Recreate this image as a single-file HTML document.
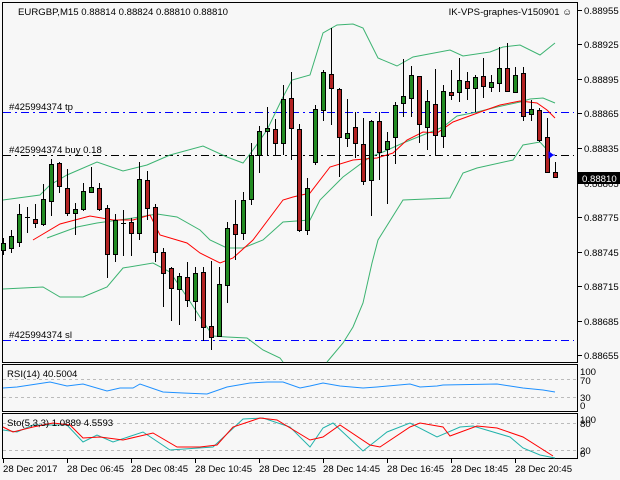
<!DOCTYPE html>
<html><head><meta charset="utf-8"><style>
html,body{margin:0;padding:0;background:#f7f7f7;}
svg{display:block;font-family:"Liberation Sans",sans-serif;font-size:9.6px;}
</style></head><body>
<svg width="620" height="480" viewBox="0 0 620 480" xmlns="http://www.w3.org/2000/svg">
<rect width="620" height="480" fill="#f7f7f7"/>
<g fill="none" stroke="#000" stroke-width="1">
<rect x="2.5" y="2.5" width="575" height="360"/>
<rect x="2.5" y="364.5" width="575" height="47"/>
<rect x="2.5" y="413.5" width="575" height="45"/>
</g>
<g stroke="#000">
<line x1="578" y1="10.5" x2="582" y2="10.5"/><line x1="578" y1="44.5" x2="582" y2="44.5"/><line x1="578" y1="79.5" x2="582" y2="79.5"/><line x1="578" y1="113.5" x2="582" y2="113.5"/><line x1="578" y1="148.5" x2="582" y2="148.5"/><line x1="578" y1="217.5" x2="582" y2="217.5"/><line x1="578" y1="252.5" x2="582" y2="252.5"/><line x1="578" y1="286.5" x2="582" y2="286.5"/><line x1="578" y1="321.5" x2="582" y2="321.5"/><line x1="578" y1="355.5" x2="582" y2="355.5"/>
<line x1="3.5" y1="459" x2="3.5" y2="463"/><line x1="67.5" y1="459" x2="67.5" y2="463"/><line x1="131.5" y1="459" x2="131.5" y2="463"/><line x1="195.5" y1="459" x2="195.5" y2="463"/><line x1="259.5" y1="459" x2="259.5" y2="463"/><line x1="323.5" y1="459" x2="323.5" y2="463"/><line x1="387.5" y1="459" x2="387.5" y2="463"/><line x1="451.5" y1="459" x2="451.5" y2="463"/><line x1="515.5" y1="459" x2="515.5" y2="463"/>
</g>
<g fill="#000">
<text x="584" y="14">0.88955</text><text x="584" y="48">0.88925</text><text x="584" y="83">0.88895</text><text x="584" y="117">0.88865</text><text x="584" y="152">0.88835</text><text x="584" y="187">0.88805</text><text x="584" y="221">0.88775</text><text x="584" y="256">0.88745</text><text x="584" y="290">0.88715</text><text x="584" y="325">0.88685</text><text x="584" y="359">0.88655</text>
</g>
<rect x="578" y="172" width="42" height="12" fill="#000"/>
<text x="582" y="182" fill="#fff">0.88810</text>
<g fill="#000">
<text x="3" y="472">28 Dec 2017</text><text x="67" y="472">28 Dec 06:45</text><text x="131" y="472">28 Dec 08:45</text><text x="195" y="472">28 Dec 10:45</text><text x="259" y="472">28 Dec 12:45</text><text x="323" y="472">28 Dec 14:45</text><text x="387" y="472">28 Dec 16:45</text><text x="451" y="472">28 Dec 18:45</text><text x="515" y="472">28 Dec 20:45</text>
</g>
<g fill="none" stroke-width="1" stroke-dasharray="8,4,2,4">
<line x1="3" y1="112.5" x2="574" y2="112.5" stroke="#0000ff"/>
<line x1="3" y1="155.5" x2="574" y2="155.5" stroke="#000"/>
<line x1="3" y1="340.5" x2="574" y2="340.5" stroke="#0000ff"/>
</g>
<g fill="#000">
<text x="9" y="110">#425994374 tp</text>
<text x="9" y="153">#425994374 buy 0.18</text>
<text x="9" y="338">#425994374 sl</text>
<text x="18" y="15">EURGBP,M15  0.88814 0.88824 0.88810 0.88810</text>
<text x="572" y="15" text-anchor="end">IK-VPS-graphes-V150901 ☺</text>
</g>
<g fill="none" stroke="#3cb371" stroke-width="1">
<polyline points="3,200 40,195 50,185 67,175 97,162 123,171 147,165 170,155 203,146 227,157 243,163 253,150 267,130 283,97 292,80 310,75 323,33 337,25 353,24 363,28 378,58 397,66 413,57 450,50 463,56 490,52 503,47 520,45 540,55 555,43"/>
<polyline points="47,238 77,227 97,223 133,218 157,214 177,217 200,230 210,240 227,248 243,248 263,240 283,222 310,220 320,200 343,177 370,157 383,152 403,143 443,127 457,116 477,112 497,107 520,102 530,99 543,98 555,103"/>
<polyline points="3,289 43,287 60,297 83,297 107,287 123,268 153,263 170,272 187,297 200,317 213,336 227,337 247,338 263,350 280,358 283,362"/>
<polyline points="327,362 343,343 353,327 363,303 372,263 378,240 403,200 450,198 463,173 477,168 513,160 523,145 540,142 550,153"/>
</g>
<polyline fill="none" stroke="#ff0000" points="33,240 60,224 90,216 113,220 133,220 150,215 160,235 187,243 200,253 220,263 233,258 253,240 283,200 293,197 310,193 330,167 353,160 377,158 393,153 407,140 423,132 437,133 453,122 483,111 500,105 520,101 537,103 547,110 555,118"/>
<g stroke="#000" stroke-width="1">
<line x1="3.5" y1="238" x2="3.5" y2="255"/><line x1="11.5" y1="230" x2="11.5" y2="253"/><line x1="19.5" y1="204" x2="19.5" y2="247"/><line x1="27.5" y1="207" x2="27.5" y2="233"/><line x1="35.5" y1="204" x2="35.5" y2="228"/><line x1="43.5" y1="184" x2="43.5" y2="226"/><line x1="51.5" y1="159" x2="51.5" y2="216"/><line x1="59.5" y1="162" x2="59.5" y2="193"/><line x1="67.5" y1="169" x2="67.5" y2="216"/><line x1="75.5" y1="203" x2="75.5" y2="235"/><line x1="83.5" y1="183" x2="83.5" y2="211"/><line x1="91.5" y1="167" x2="91.5" y2="193"/><line x1="99.5" y1="183" x2="99.5" y2="211"/><line x1="107.5" y1="205" x2="107.5" y2="278"/><line x1="115.5" y1="214" x2="115.5" y2="262"/><line x1="123.5" y1="210" x2="123.5" y2="256"/><line x1="131.5" y1="218" x2="131.5" y2="256"/><line x1="139.5" y1="162" x2="139.5" y2="240"/><line x1="147.5" y1="171" x2="147.5" y2="220"/><line x1="155.5" y1="204" x2="155.5" y2="262"/><line x1="163.5" y1="248" x2="163.5" y2="307"/><line x1="171.5" y1="267" x2="171.5" y2="321"/><line x1="179.5" y1="273" x2="179.5" y2="325"/><line x1="187.5" y1="262" x2="187.5" y2="307"/><line x1="195.5" y1="267" x2="195.5" y2="321"/><line x1="203.5" y1="267" x2="203.5" y2="341"/><line x1="211.5" y1="261" x2="211.5" y2="350"/><line x1="219.5" y1="267" x2="219.5" y2="336"/><line x1="227.5" y1="222" x2="227.5" y2="303"/><line x1="235.5" y1="200" x2="235.5" y2="260"/><line x1="243.5" y1="192" x2="243.5" y2="240"/><line x1="251.5" y1="143" x2="251.5" y2="205"/><line x1="259.5" y1="126" x2="259.5" y2="173"/><line x1="267.5" y1="107" x2="267.5" y2="155"/><line x1="275.5" y1="119" x2="275.5" y2="155"/><line x1="283.5" y1="85" x2="283.5" y2="155"/><line x1="291.5" y1="72" x2="291.5" y2="160"/><line x1="299.5" y1="124" x2="299.5" y2="232"/><line x1="307.5" y1="178" x2="307.5" y2="235"/><line x1="315.5" y1="105" x2="315.5" y2="165"/><line x1="323.5" y1="70" x2="323.5" y2="121"/><line x1="331.5" y1="28" x2="331.5" y2="125"/><line x1="339.5" y1="88" x2="339.5" y2="177"/><line x1="347.5" y1="99" x2="347.5" y2="147"/><line x1="355.5" y1="112" x2="355.5" y2="158"/><line x1="363.5" y1="118" x2="363.5" y2="185"/><line x1="371.5" y1="120" x2="371.5" y2="216"/><line x1="379.5" y1="112" x2="379.5" y2="180"/><line x1="387.5" y1="132" x2="387.5" y2="204"/><line x1="395.5" y1="102" x2="395.5" y2="164"/><line x1="403.5" y1="59" x2="403.5" y2="117"/><line x1="411.5" y1="66" x2="411.5" y2="117"/><line x1="419.5" y1="76" x2="419.5" y2="143"/><line x1="427.5" y1="90" x2="427.5" y2="150"/><line x1="435.5" y1="69" x2="435.5" y2="155"/><line x1="443.5" y1="85" x2="443.5" y2="148"/><line x1="451.5" y1="70" x2="451.5" y2="100"/><line x1="459.5" y1="58" x2="459.5" y2="102"/><line x1="467.5" y1="72" x2="467.5" y2="100"/><line x1="475.5" y1="75" x2="475.5" y2="112"/><line x1="483.5" y1="58" x2="483.5" y2="98"/><line x1="491.5" y1="75" x2="491.5" y2="92"/><line x1="499.5" y1="47" x2="499.5" y2="92"/><line x1="507.5" y1="43" x2="507.5" y2="91"/><line x1="515.5" y1="67" x2="515.5" y2="92"/><line x1="523.5" y1="67" x2="523.5" y2="121"/><line x1="531.5" y1="100" x2="531.5" y2="121"/><line x1="539.5" y1="108" x2="539.5" y2="142"/><line x1="547.5" y1="118" x2="547.5" y2="173"/><line x1="555.5" y1="162" x2="555.5" y2="177"/>
<line x1="25" y1="217.5" x2="30" y2="217.5"/><line x1="121" y1="223.5" x2="126" y2="223.5"/>
</g>
<g stroke="#000" stroke-width="1" fill="#228b22">
<rect x="1.5" y="243.5" width="4" height="7"/><rect x="9.5" y="236.5" width="4" height="12"/><rect x="17.5" y="214.5" width="4" height="28"/><rect x="41.5" y="199.5" width="4" height="25"/><rect x="49.5" y="164.5" width="4" height="37"/><rect x="73.5" y="209.5" width="4" height="4"/><rect x="81.5" y="191.5" width="4" height="18"/><rect x="89.5" y="187.5" width="4" height="5"/><rect x="113.5" y="220.5" width="4" height="34"/><rect x="137.5" y="179.5" width="4" height="54"/><rect x="177.5" y="276.5" width="4" height="13"/><rect x="193.5" y="273.5" width="4" height="28"/><rect x="217.5" y="284.5" width="4" height="52"/><rect x="225.5" y="228.5" width="4" height="57"/><rect x="241.5" y="200.5" width="4" height="33"/><rect x="249.5" y="155.5" width="4" height="44"/><rect x="257.5" y="131.5" width="4" height="24"/><rect x="265.5" y="128.5" width="4" height="3"/><rect x="281.5" y="99.5" width="4" height="44"/><rect x="305.5" y="188.5" width="4" height="42"/><rect x="313.5" y="109.5" width="4" height="53"/><rect x="321.5" y="72.5" width="4" height="38"/><rect x="345.5" y="133.5" width="4" height="5"/><rect x="369.5" y="121.5" width="4" height="59"/><rect x="385.5" y="141.5" width="4" height="8"/><rect x="393.5" y="105.5" width="4" height="32"/><rect x="401.5" y="96.5" width="4" height="7"/><rect x="409.5" y="75.5" width="4" height="23"/><rect x="425.5" y="101.5" width="4" height="26"/><rect x="441.5" y="91.5" width="4" height="45"/><rect x="457.5" y="80.5" width="4" height="12"/><rect x="473.5" y="77.5" width="4" height="11"/><rect x="489.5" y="82.5" width="4" height="5"/><rect x="497.5" y="68.5" width="4" height="15"/><rect x="513.5" y="75.5" width="4" height="17"/><rect x="529.5" y="109.5" width="4" height="5"/>
</g>
<g stroke="#000" stroke-width="1" fill="#b22222">
<rect x="33.5" y="219.5" width="4" height="4"/><rect x="57.5" y="163.5" width="4" height="23"/><rect x="65.5" y="188.5" width="4" height="25"/><rect x="97.5" y="188.5" width="4" height="21"/><rect x="105.5" y="208.5" width="4" height="46"/><rect x="129.5" y="222.5" width="4" height="11"/><rect x="145.5" y="180.5" width="4" height="28"/><rect x="153.5" y="207.5" width="4" height="45"/><rect x="161.5" y="252.5" width="4" height="21"/><rect x="169.5" y="268.5" width="4" height="20"/><rect x="185.5" y="277.5" width="4" height="23"/><rect x="201.5" y="272.5" width="4" height="55"/><rect x="209.5" y="326.5" width="4" height="11"/><rect x="233.5" y="224.5" width="4" height="10"/><rect x="273.5" y="129.5" width="4" height="14"/><rect x="289.5" y="98.5" width="4" height="30"/><rect x="297.5" y="129.5" width="4" height="101"/><rect x="329.5" y="74.5" width="4" height="14"/><rect x="337.5" y="89.5" width="4" height="48"/><rect x="353.5" y="127.5" width="4" height="16"/><rect x="361.5" y="144.5" width="4" height="37"/><rect x="377.5" y="121.5" width="4" height="31"/><rect x="417.5" y="76.5" width="4" height="48"/><rect x="433.5" y="104.5" width="4" height="31"/><rect x="449.5" y="92.5" width="4" height="3"/><rect x="465.5" y="81.5" width="4" height="7"/><rect x="481.5" y="76.5" width="4" height="10"/><rect x="505.5" y="68.5" width="4" height="23"/><rect x="521.5" y="73.5" width="4" height="43"/><rect x="537.5" y="110.5" width="4" height="30"/><rect x="545.5" y="137.5" width="4" height="35"/><rect x="553.5" y="172.5" width="4" height="5"/>
</g>
<path d="M549,152 l4,3 l-4,3 z M551,155 h4" fill="#0000ff" stroke="#0000ff"/>
<g stroke="#bbb" stroke-dasharray="3,3"><line x1="3" y1="379.5" x2="577" y2="379.5"/><line x1="3" y1="397.5" x2="577" y2="397.5"/><line x1="3" y1="423.5" x2="577" y2="423.5"/><line x1="3" y1="450.5" x2="577" y2="450.5"/></g>
<text x="7" y="377" fill="#000">RSI(14) 40.5004</text>
<polyline fill="none" stroke="#1e90ff" points="3,388 17,387 50,382 67,386 83,384 107,391 120,388 133,388 140,384 163,392 183,393 207,394 227,387 250,383 267,382 283,382 300,388 310,386 323,383 340,386 363,388 377,387 410,384 420,387 437,386 443,385 497,384 510,386 523,388 543,390 555,392"/>
<g fill="#000"><text x="580" y="375">100</text><text x="580" y="384">70</text><text x="580" y="401">30</text><text x="580" y="409">0</text></g>
<polyline fill="none" stroke="#20b2aa" points="3,430 17,432 33,425 67,425 83,442 97,435 113,442 143,432 170,450 213,447 243,419 263,418 290,427 310,447 323,428 333,423 363,451 387,432 410,423 437,437 460,427 473,426 510,437 523,448 540,455 555,458"/>
<polyline fill="none" stroke="#ff0000" points="3,427 13,432 33,427 53,423 70,425 83,438 100,437 123,440 153,433 177,447 200,447 217,445 233,427 260,418 277,420 310,440 323,437 340,425 370,445 380,447 410,427 420,423 443,427 450,436 477,426 497,428 523,437 553,456"/>
<text x="7" y="426" fill="#000">Sto(5,3,3) 1.0889 4.5593</text>
<g fill="#000"><text x="580" y="423">100</text><text x="580" y="427">80</text><text x="580" y="454">20</text><text x="580" y="457">0</text></g>
</svg>
</body></html>
